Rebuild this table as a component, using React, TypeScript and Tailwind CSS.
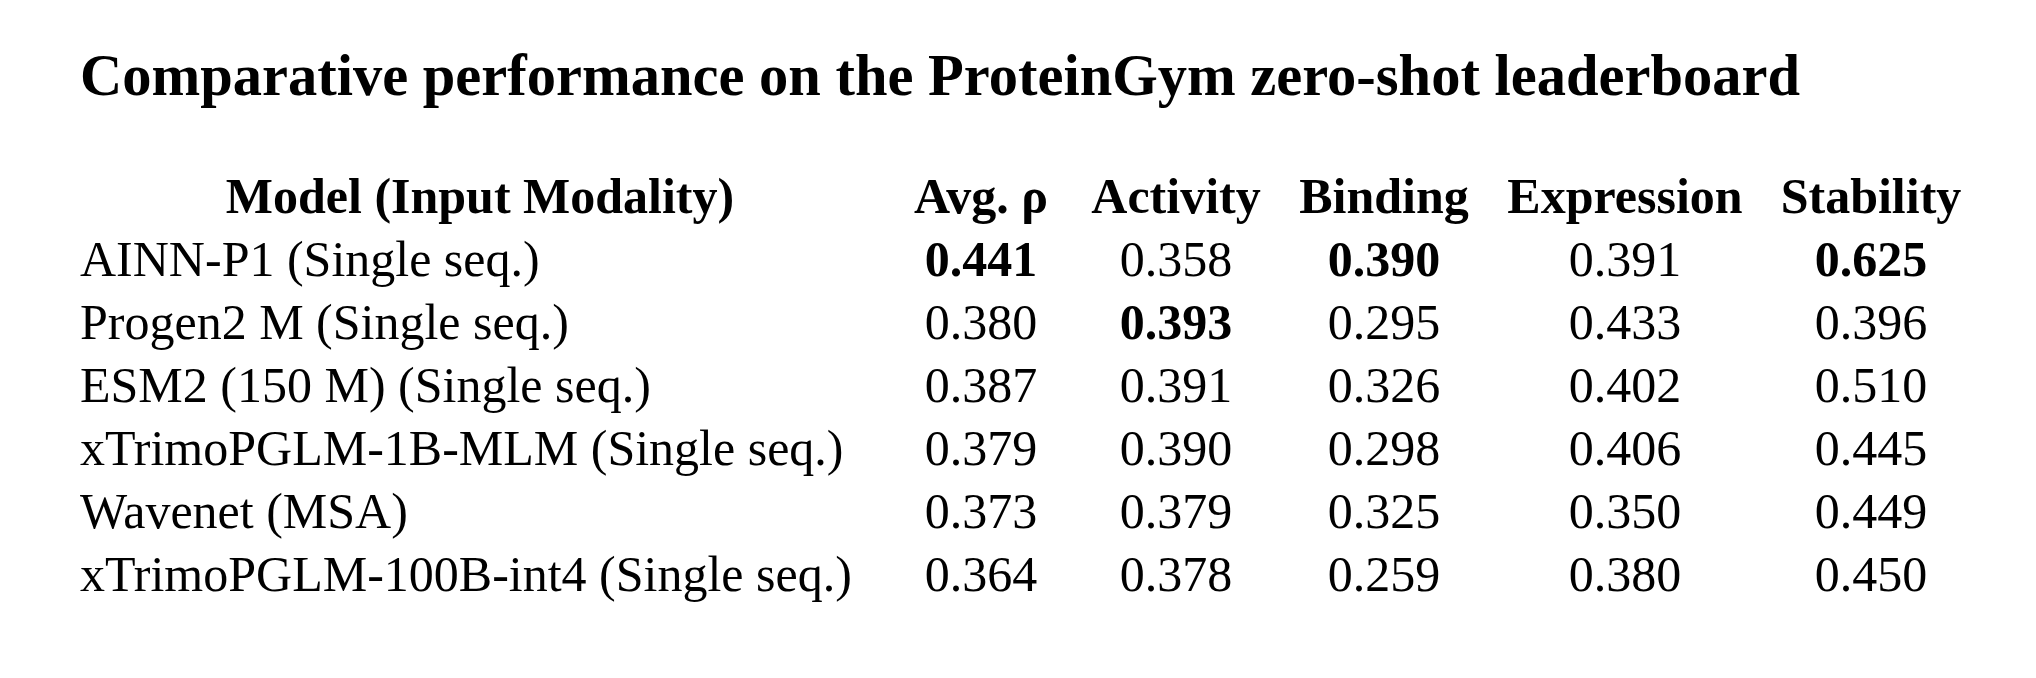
const columns = ["Avg. ρ", "Activity", "Binding", "Expression", "Stability"];

// bold marks the best score in a column
const rows: { model: string; values: string[]; bold: number[] }[] = [
  { model: "AINN-P1 (Single seq.)", values: ["0.441", "0.358", "0.390", "0.391", "0.625"], bold: [0, 2, 4] },
  { model: "Progen2 M (Single seq.)", values: ["0.380", "0.393", "0.295", "0.433", "0.396"], bold: [1] },
  { model: "ESM2 (150 M) (Single seq.)", values: ["0.387", "0.391", "0.326", "0.402", "0.510"], bold: [] },
  { model: "xTrimoPGLM-1B-MLM (Single seq.)", values: ["0.379", "0.390", "0.298", "0.406", "0.445"], bold: [] },
  { model: "Wavenet (MSA)", values: ["0.373", "0.379", "0.325", "0.350", "0.449"], bold: [] },
  { model: "xTrimoPGLM-100B-int4 (Single seq.)", values: ["0.364", "0.378", "0.259", "0.380", "0.450"], bold: [] },
];

export default function App() {
  return (
    <div className="min-h-[678px] w-full bg-white pl-[80px] pt-[42px] text-black font-['Liberation_Serif','Times_New_Roman',serif]">
      <h1 className="text-[58.5px] leading-[67px] font-bold whitespace-nowrap">
        Comparative performance on the ProteinGym zero-shot leaderboard
      </h1>

      <div className="mt-[56px] grid grid-cols-[800px_202px_188px_228px_254px_238px] text-[50px] leading-[63px] whitespace-nowrap">
        {/* header */}
        <div className="font-bold text-center">Model (Input Modality)</div>
        {columns.map((c) => (
          <div key={c} className="font-bold text-center">
            {c}
          </div>
        ))}

        {rows.map((r) => (
          <div key={r.model} className="contents">
            <div>{r.model}</div>
            {r.values.map((v, i) => (
              <div key={i} className={r.bold.includes(i) ? "font-bold text-center" : "text-center"}>
                {v}
              </div>
            ))}
          </div>
        ))}
      </div>
    </div>
  );
}
